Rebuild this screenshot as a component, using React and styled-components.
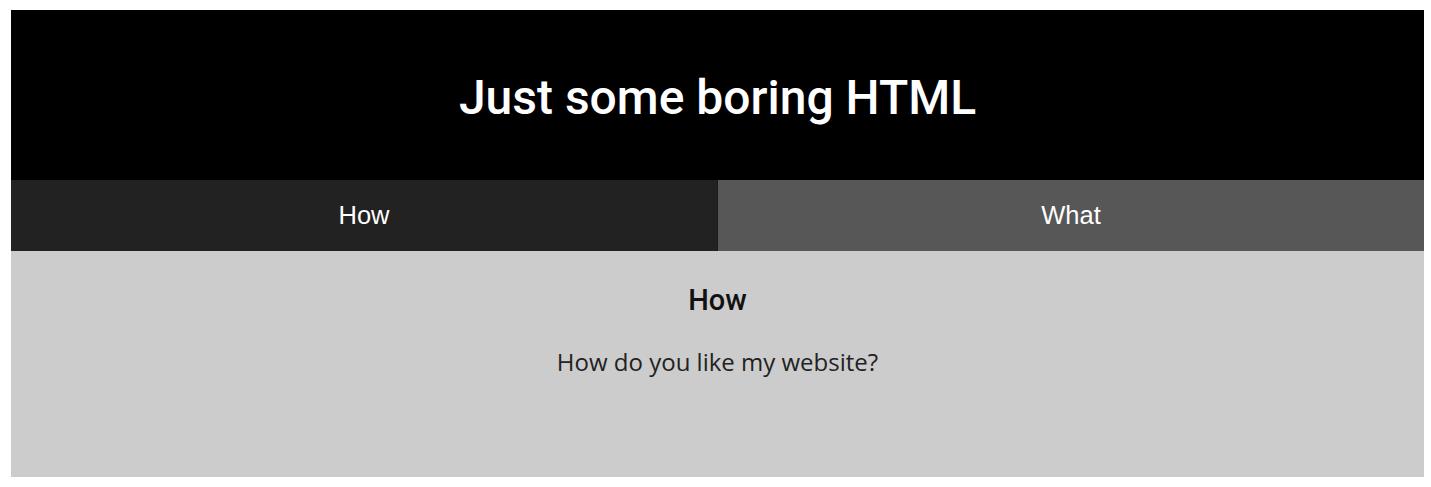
import React, { useState } from 'react'
import styled, { createGlobalStyle } from 'styled-components'

const GlobalStyle = createGlobalStyle`
    html, body {
        margin: 0;
        padding: 0;
        background: #fff;
    }
    body {
        padding: 10px 7px 10px 11px;
        font-family: "Open Sans", sans-serif;
    }
`;

const StyledPage = styled.div`
    display: flex;
    flex-direction: column;
`;

const StyledHeader = styled.header`
    background: #000;
    height: 170px;
    display: flex;
    align-items: center;
    justify-content: center;
`;

const StyledTitle = styled.h1`
    margin: 0;
    padding-top: 4px;
    color: #fff;
    font-family: Roboto, sans-serif;
    font-weight: 500;
    font-size: 48px;
`;

const StyledTabs = styled.nav`
    display: grid;
    grid-template-columns: 707px 1fr;
    height: 71px;
`;

const StyledTab = styled.button`
    border: none;
    margin: 0;
    padding: 0;
    background: ${props => props.active ? '#222' : '#575757'};
    border-right: ${props => props.active ? '1px solid #1b1b1b' : 'none'};
    color: #fff;
    font-family: "Liberation Sans", Arial, sans-serif;
    font-size: 25.5px;
    cursor: pointer;
`;

const StyledContent = styled.section`
    background: #ccc;
    height: 226px;
    display: flex;
    flex-direction: column;
    align-items: center;
    padding-top: 29px;
    box-sizing: border-box;
`;

const StyledHeading = styled.h2`
    margin: 0;
    font-family: Roboto, sans-serif;
    font-weight: 500;
    font-size: 29px;
    color: #111;
    line-height: 40px;
`;

const StyledText = styled.p`
    margin: 26px 0 0;
    font-family: "Open Sans", sans-serif;
    font-size: 24px;
    color: #222;
    line-height: 32px;
`;

const tabs = [
    { name: 'How', text: 'How do you like my website?' },
    { name: 'What', text: 'What do you think of my website?' }
];

function App() {
    const [current, setCurrent] = useState(0);

    return (
        <StyledPage>
            <GlobalStyle />
            <StyledHeader>
                <StyledTitle>Just some boring HTML</StyledTitle>
            </StyledHeader>
            <StyledTabs>
                {tabs.map((tab, i) =>
                    <StyledTab key={i} active={i === current} onClick={() => setCurrent(i)}>{tab.name}</StyledTab>
                )}
            </StyledTabs>
            <StyledContent>
                <StyledHeading>{tabs[current].name}</StyledHeading>
                <StyledText>{tabs[current].text}</StyledText>
            </StyledContent>
        </StyledPage>
    )
}

export default App;
